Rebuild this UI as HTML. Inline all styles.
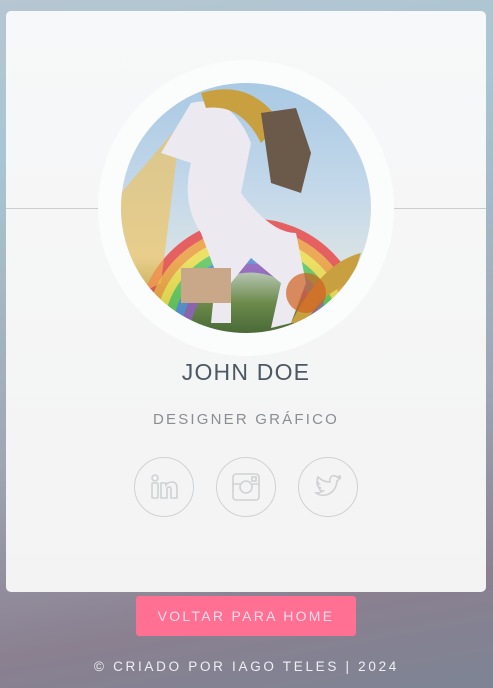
<!DOCTYPE html>
<html><head><meta charset="utf-8"><style>
*{margin:0;padding:0;box-sizing:border-box}
body{width:493px;height:688px;overflow:hidden;font-family:"Liberation Sans",sans-serif;
background:linear-gradient(170deg,#b6c6d2 0%,#a9c6d2 20%,#9fa6b4 60%,#8a8090 85%,#7d8494 100%);position:relative}
.card{position:absolute;left:6px;top:11px;width:480px;height:581px;border-radius:5px;background:linear-gradient(#f7f8f9,#f3f3f3)}
.line{position:absolute;top:197px;height:1px;background:#c9cdd0}
.outer{position:absolute;left:92px;top:49px;width:296px;height:296px;border-radius:50%;background:#fbfcfc}
.img{position:absolute;left:115px;top:72px;width:250px;height:250px;border-radius:50%;overflow:hidden;
background:linear-gradient(#a9c9e4 0%,#c5d9ea 45%,#d8e2e4 70%,#6c8a4a 88%,#4a6a38 100%)}
.name{position:absolute;top:348px;width:100%;text-align:center;font-size:23px;letter-spacing:1.2px;color:#4c5864}
.sub{position:absolute;top:400px;width:100%;text-align:center;font-size:15px;letter-spacing:2.2px;color:#8a8e92}
.ic{position:absolute;top:446px;width:60px;height:60px;border:1px solid #cfd2d4;border-radius:50%;display:flex;align-items:center;justify-content:center}
.btn{position:absolute;left:136px;top:596px;width:220px;height:40px;border-radius:3px;background:#ff7092;color:#fde;text-align:center;line-height:40px;font-size:14px;letter-spacing:2.3px}
.foot{position:absolute;top:659px;width:100%;text-align:center;color:#eef0f3;font-size:13.5px;letter-spacing:2.7px}
</style></head><body>
<div class="card">
<div class="line" style="left:0;width:92px"></div>
<div class="line" style="left:388px;width:92px"></div>
<div class="outer"></div>
<div class="img">
<svg width="250" height="250" viewBox="0 0 250 250">
<g fill="none" stroke-width="9" opacity=".85">
<circle cx="130" cy="250" r="110" stroke="#e84a4a"/>
<circle cx="130" cy="250" r="101" stroke="#f0a040"/>
<circle cx="130" cy="250" r="92" stroke="#f0e050"/>
<circle cx="130" cy="250" r="83" stroke="#60c860"/>
<circle cx="130" cy="250" r="74" stroke="#5090e0"/>
<circle cx="130" cy="250" r="65" stroke="#9060c0"/>
</g>
<path d="M0 110 L60 40 L40 200 L0 220Z" fill="#f4c050" opacity=".6"/>
<path d="M70 20 Q110 10 130 60 L120 110 Q150 150 175 150 L185 200 L170 240 L150 245 L160 200 L130 175 L110 200 L110 240 L90 240 L95 190 L80 150 Q60 120 70 80 L40 70 Z" fill="#eceaf0"/>
<path d="M80 10 Q130 -5 160 40 L140 60 Q120 20 85 25Z" fill="#c9a040"/>
<path d="M170 240 Q200 180 240 170 L230 200 Q200 210 185 240Z" fill="#c9a040"/>
<path d="M140 30 L175 25 L190 70 L180 110 L150 100Z" fill="#6b5a4a"/>
<rect x="60" y="185" width="50" height="35" fill="#c8a888"/>
<circle cx="185" cy="210" r="20" fill="#d06020" opacity=".7"/>
</svg>
</div>
<div class="name">JOHN DOE</div>
<div class="sub">DESIGNER GRÁFICO</div>
<div class="ic" style="left:128px"><svg width="30" height="30" viewBox="0 0 30 30" fill="none" stroke="#cfd2d4" stroke-width="1.6"><rect x="3" y="11" width="6" height="15" rx="1"/><circle cx="6" cy="6" r="3"/><path d="M12 26V11h5v2q2-3 6-3q5 0 5 6v10h-6v-9q0-2-2-2t-2 2v9Z"/></svg></div>
<div class="ic" style="left:210px"><svg width="30" height="30" viewBox="0 0 30 30" fill="none" stroke="#cfd2d4" stroke-width="1.6"><rect x="2" y="2" width="26" height="26" rx="3"/><path d="M2 12h7M21 12h7"/><circle cx="15" cy="15" r="6"/><rect x="21" y="5" width="4" height="4"/></svg></div>
<div class="ic" style="left:292px"><svg width="30" height="30" viewBox="0 0 30 30" fill="none" stroke="#cfd2d4" stroke-width="1.6"><path d="M28 6q-2 1-3 1q2-1 2-3q-2 1-3 1q-2-2-5-1q-3 2-2 6q-7 0-12-5q-2 4 1 7q-1 0-2-1q0 4 4 5h-2q1 3 4 3q-3 2-7 2q4 3 10 2q10-3 11-14q2-1 2-3Z"/></svg></div>
</div>
<div class="btn">VOLTAR PARA HOME</div>
<div class="foot">© CRIADO POR IAGO TELES | 2024</div>
</body></html>
